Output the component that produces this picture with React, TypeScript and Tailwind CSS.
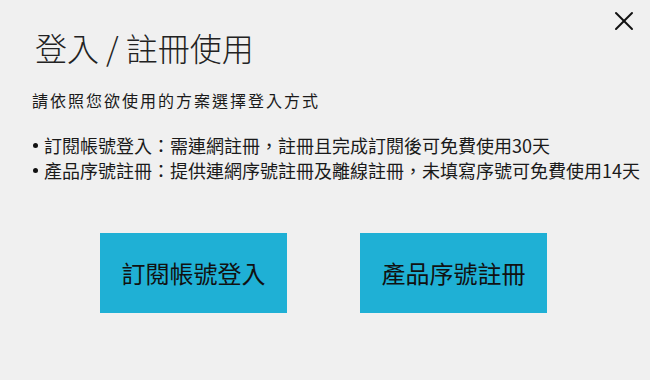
import { X } from 'lucide-react';

const FONT = "font-['Segoe_UI','Noto_Sans_CJK_TC',sans-serif]";

/** Choice button for the login / registration dialog. */
function ChoiceButton({ label }: { label: string }) {
  return (
    <button
      type="button"
      className="w-[187px] h-[80px] bg-[#1fb0d5] text-[24px] text-[#111] flex items-center justify-center"
    >
      {label}
    </button>
  );
}

function Bullet({ children }: { children: React.ReactNode }) {
  return (
    <li className="flex items-center">
      <span className="ml-[1px] w-[5px] h-[5px] rounded-full bg-[#111] shrink-0" />
      <span className="ml-[6px]">{children}</span>
    </li>
  );
}

export default function App() {
  return (
    <div className={`${FONT} w-[650px] h-[380px] bg-[#f0f0f0] relative overflow-hidden text-[#1a1a1a]`}>
      <button type="button" className="absolute top-[5px] right-[10px] text-[#111]" aria-label="close">
        <X className="w-[32px] h-[32px]" strokeWidth={1.5} />
      </button>

      <div className="pl-[32px] pt-[27px]">
        <h1 className="ml-[3px] text-[32px] leading-[40px] font-light text-[#222]">登入 / 註冊使用</h1>

        <p className="mt-[21px] text-[16px] leading-[24px] tracking-[2px]">請依照您欲使用的方案選擇登入方式</p>

        <ul className="mt-[21px] text-[18px] leading-[25px]">
          <Bullet>訂閱帳號登入：需連網註冊，註冊且完成訂閱後可免費使用30天</Bullet>
          <Bullet>產品序號註冊：提供連網序號註冊及離線註冊，未填寫序號可免費使用14天</Bullet>
        </ul>
      </div>

      <div className="mt-[50px] pl-[100px] flex gap-[73px]">
        <ChoiceButton label="訂閱帳號登入" />
        <ChoiceButton label="產品序號註冊" />
      </div>
    </div>
  );
}
